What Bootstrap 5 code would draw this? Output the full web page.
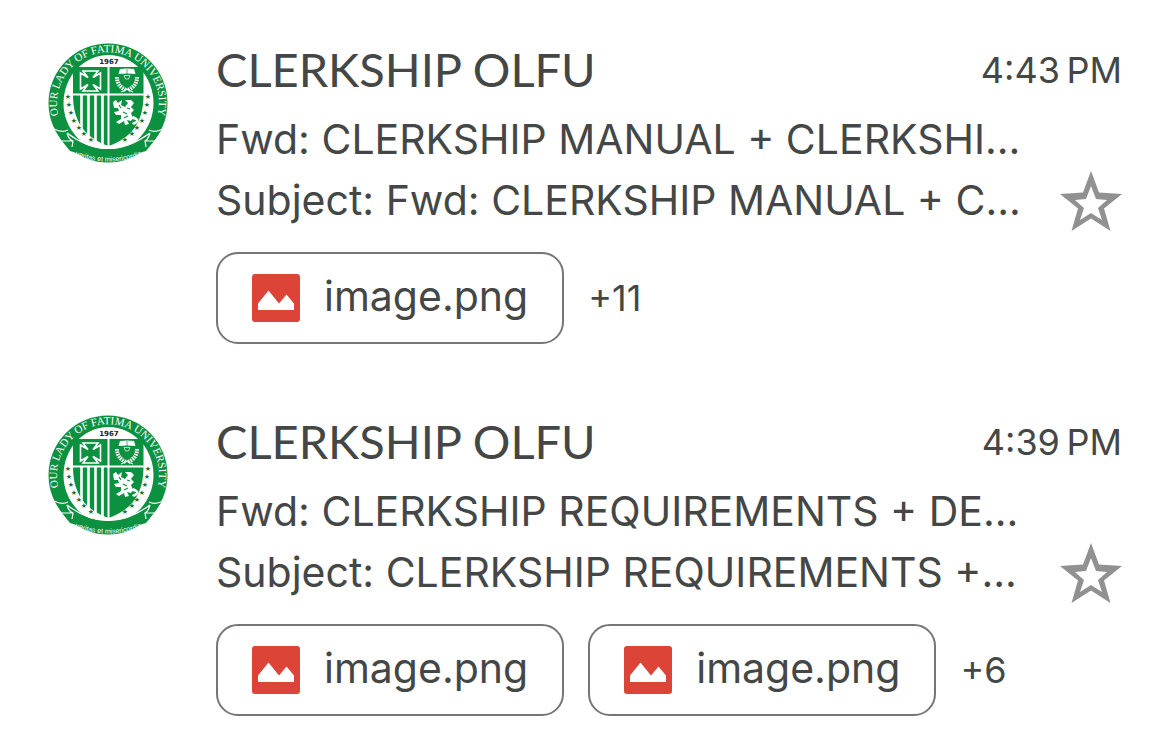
<!DOCTYPE html>
<html lang="en">
<head>
<meta charset="utf-8">
<meta name="viewport" content="width=device-width, initial-scale=1">
<title>Inbox</title>
<link rel="stylesheet" href="https://cdn.jsdelivr.net/npm/bootstrap@5.3.0/dist/css/bootstrap.min.css">
<style>
body { background: #fff; color: #444746; font-family: Inter, "Liberation Sans", sans-serif; }
.message { padding: 40px 47px 28px 48px; gap: 48px; }
.message + .message { padding-top: 0; margin-top: 40px; }
.avatar { width: 120px; height: 120px; margin-top: 3px; }
.sender { font-family: Lato, sans-serif; font-size: 47px; line-height: 58px; font-weight: 400; }
.sent-at { font-size: 36px; line-height: 60px; }
.message-line { font-size: 41px; line-height: 61px; white-space: nowrap; }
.lines { margin-top: 9px; }
.star { width: 62px; height: 60px; color: #919191; }
.files { gap: 24px; margin-top: 21px; }
.file-chip { height: 92px; padding: 0 34px 4px; gap: 24px; border: 2px solid #747775; border-radius: 22px; background: #fff; color: inherit; font-size: 41px; line-height: 60px; }
.file-chip svg { width: 48px; height: 48px; margin-top: 4px; }
.more { font-size: 36px; line-height: 60px; }
</style>
</head>
<body>
<svg class="d-none" aria-hidden="true">
  <symbol id="photo" viewBox="0 0 48 48">
    <rect width="48" height="48" rx="3" fill="#db4437"/>
    <path d="M6 29.500 16.500 16.500 27 29.500l7.500-9L42 29.500V36H6z" fill="#fff"/>
  </symbol>
  <symbol id="star" viewBox="0 0 62 60">
    <path fill="currentColor" fill-rule="evenodd" d="M31 0 39 21.500 62 23 44 37.500 50.500 60 31 47.500 11.500 60 18 37.500 0 23 23 21.500zM31 15 26 28 15 29 24 37 20 49 31 42 42 49 38 37 47 29 36 28z"/>
  </symbol>
  <symbol id="seal" viewBox="0 0 120 120">
    <clipPath id="disc"><circle cx="60" cy="60" r="59.500"/></clipPath>
    <circle cx="60" cy="60" r="59.500" fill="#0b9140"/>
    <ellipse cx="60.500" cy="60" rx="45" ry="48" fill="#fff"/>
    <path id="ring" d="M12 77.500A51 51 0 1 1 108 77.500" fill="none"/>
    <text font-family="Liberation Serif, serif" font-size="11" fill="#fff" text-anchor="middle"><textPath href="#ring" startOffset="50%">OUR LADY OF FATIMA UNIVERSITY</textPath></text>
    <text x="61" y="20.500" text-anchor="middle" font-family="DejaVu Sans, sans-serif" font-weight="700" font-size="7" fill="#222">1967</text>
    <path d="M25 24H95.500V52C95.500 80 83 95 60.500 103 38 95 25 80 25 52z" fill="#0b9140"/>
    <g stroke="#fff" fill="none">
      <path d="M60.500 24V103" stroke-width="2"/>
      <path d="M25 51.500H96" stroke-width="2"/>
      <path d="M33.500 51V86M40.500 51V93M47.500 51V98M54.500 51V101" stroke-width="2.600"/>
    </g>
    <path d="M35 28H50L45 34.500 52.500 30V46L45 41.500 50 48H35L40 41.500 32.500 46V30L40 34.500z" fill="#0b9140" stroke="#fff" stroke-width="1.600"/>
    <path d="M72 26 79 25.500 86 26 87.500 31 79 30.500 70.500 31z" fill="#fff"/>
    <g fill="none" stroke="#fff">
      <path d="M79 26V31" stroke="#0b9140" stroke-width=".7"/>
      <path d="M76 32.500H82L80.500 36H77.500z" stroke-width=".7"/>
      <path d="M69 34Q69 43 78 47M89 34Q89 43 80 47" stroke-width="4" stroke-dasharray="1.600 .9"/>
      <path d="M73 49 80 46M85 49 78 46" stroke-width="1"/>
    </g>
    <path d="M65 59 68 57 70 60 74 57 73 62 77 64 80 60 77 57 83 57 86 60 83 64 86 67 83 70 85 75 83 78 79 77 81 81 77 82 76 78 71 81 68 79 73 76 73 72 68 72 66 69 71 68 70 65 66 65zM85 73Q94 76 88 81Q85 83 84 80L88 78Q89 77 84 76z" fill="#fff"/>
    <path d="M71 62 73 65M75 69 79 71M76 75 80 73M79 65 82 66" stroke="#0b9140" stroke-width="1.200"/>
    <g fill="#176c3b" font-family="DejaVu Sans, sans-serif" font-size="7" text-anchor="middle">
      <text x="20" y="56">★</text><text x="21" y="64">★</text><text x="23" y="72">★</text><text x="26" y="80">★</text><text x="31" y="87">★</text><text x="36" y="93">★</text><text x="43" y="99">★</text>
      <text x="100" y="56">★</text><text x="99" y="64">★</text><text x="97" y="72">★</text><text x="94" y="80">★</text><text x="89" y="87">★</text><text x="84" y="93">★</text><text x="77" y="99">★</text>
    </g>
    <g clip-path="url(#disc)">
      <path d="M7 86 20 87 19 91Q60 121 101 91L100 86 114 86 106 98 98 108 60 119 22 108 14 98z" fill="#0b9140"/>
      <path d="M6 86Q14 90 20 87M115 86Q107 90 101 87M19 90Q21 97 25 98L24 104M102 90Q100 97 97 98L98 104M19 90Q60 121 102 90M13 98 25 98M107 98 97 98" fill="none" stroke="#fff" stroke-width="1.200"/>
      <path id="mottoline" d="M19 109Q60 128 102 109" fill="none"/>
      <text font-family="Liberation Sans, sans-serif" font-size="7" fill="#fff" text-anchor="middle"><textPath href="#mottoline" startOffset="50%">veritas et misericordia</textPath></text>
    </g>
  </symbol>
</svg>
<main>
  <article class="message d-flex align-items-start">
    <svg class="avatar flex-shrink-0" role="img" aria-label="Our Lady of Fatima University"><use href="#seal"/></svg>
    <div class="flex-grow-1">
      <header class="d-flex justify-content-between">
        <h2 class="sender mb-0">CLERKSHIP OLFU</h2>
        <time class="sent-at">4:43&#8239;PM</time>
      </header>
      <div class="lines d-flex justify-content-between align-items-end">
        <div>
          <div class="message-line">Fwd: CLERKSHIP MANUAL + CLERKSHI...</div>
          <div class="message-line">Subject: Fwd: CLERKSHIP MANUAL + C...</div>
        </div>
        <button class="btn p-0 border-0 lh-1" type="button" aria-label="Star"><svg class="star d-block"><use href="#star"/></svg></button>
      </div>
      <div class="files d-flex align-items-center">
        <button class="file-chip d-flex align-items-center" type="button"><svg aria-hidden="true"><use href="#photo"/></svg><span>image.png</span></button>
        <span class="more">+11</span>
      </div>
    </div>
  </article>
  <article class="message d-flex align-items-start">
    <svg class="avatar flex-shrink-0" role="img" aria-label="Our Lady of Fatima University"><use href="#seal"/></svg>
    <div class="flex-grow-1">
      <header class="d-flex justify-content-between">
        <h2 class="sender mb-0">CLERKSHIP OLFU</h2>
        <time class="sent-at">4:39&#8239;PM</time>
      </header>
      <div class="lines d-flex justify-content-between align-items-end">
        <div>
          <div class="message-line">Fwd: CLERKSHIP REQUIREMENTS + DE...</div>
          <div class="message-line">Subject: CLERKSHIP REQUIREMENTS +...</div>
        </div>
        <button class="btn p-0 border-0 lh-1" type="button" aria-label="Star"><svg class="star d-block"><use href="#star"/></svg></button>
      </div>
      <div class="files d-flex align-items-center">
        <button class="file-chip d-flex align-items-center" type="button"><svg aria-hidden="true"><use href="#photo"/></svg><span>image.png</span></button>
        <button class="file-chip d-flex align-items-center" type="button"><svg aria-hidden="true"><use href="#photo"/></svg><span>image.png</span></button>
        <span class="more">+6</span>
      </div>
    </div>
  </article>
</main>
<script src="https://cdn.jsdelivr.net/npm/bootstrap@5.3.0/dist/js/bootstrap.bundle.min.js"></script>
</body>
</html>
